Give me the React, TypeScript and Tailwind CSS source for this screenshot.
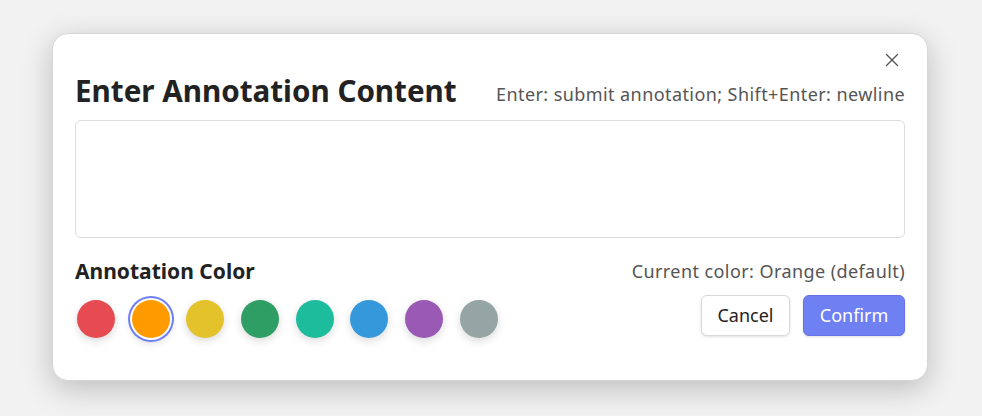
import { X } from "lucide-react";

const colors = [
  { name: "Red", hex: "#e54b51" },
  { name: "Orange", hex: "#ff9a00" },
  { name: "Yellow", hex: "#e4c22b" },
  { name: "Green", hex: "#2f9e64" },
  { name: "Teal", hex: "#1cbc9c" },
  { name: "Blue", hex: "#3598db" },
  { name: "Purple", hex: "#9b59b6" },
  { name: "Gray", hex: "#95a5a6" },
];

export default function App() {
  const selected = "Orange";
  return (
    <div
      className="flex h-[416px] w-[982px] items-start bg-[#f2f2f2] pl-[52px] pt-[33px]"
      style={{ fontFamily: '"Noto Sans", "Open Sans", sans-serif' }}
    >
      <div className="relative w-[876px] rounded-[16px] border border-[#d6d6d6] bg-white px-[22px] pb-[42px] pt-[38px] shadow-[0_8px_30px_rgba(0,0,0,0.22)]">
        <button className="absolute right-[24px] top-[15px] text-[#555]">
          <X className="h-[22px] w-[22px]" strokeWidth={1.5} />
        </button>

        <div className="flex items-end justify-between">
          <h2 className="text-[29.6px] font-bold leading-[38px] text-[#222]">Enter Annotation Content</h2>
          <p className="pb-[2px] text-[18px] tracking-[0.42px] text-[#555]">
            Enter: submit annotation; Shift+Enter: newline
          </p>
        </div>

        <textarea className="mt-[10px] block h-[118px] w-full resize-none rounded-[6px] border border-[#dcdcdc] outline-none" />

        <div className="mt-[19px] flex items-center justify-between">
          <h3 className="text-[21px] font-bold leading-[28px] text-[#222]">Annotation Color</h3>
          <span className="text-[18px] tracking-[0.42px] text-[#555]">Current color: Orange (default)</span>
        </div>

        <div className="mt-[10px] flex items-start justify-between">
          <div className="flex items-center gap-[16.7px] pl-[2px] pt-[5px]">
            {colors.map((c) => (
              <button
                key={c.name}
                title={c.name}
                className={
                  c.name === selected
                    ? "h-[38px] w-[38px] rounded-full shadow-[0_0_0_2px_#fff,0_0_0_4px_#6f7ff2,0_4px_10px_rgba(0,0,0,0.2)]"
                    : "h-[38px] w-[38px] rounded-full shadow-[0_3px_8px_rgba(0,0,0,0.15)]"
                }
                style={{ backgroundColor: c.hex }}
              />
            ))}
          </div>
          <div className="flex items-center gap-[13px]">
            <button className="h-[41px] w-[89px] rounded-[6px] border border-[#d9d9d9] bg-white text-[18px] text-[#222] shadow-[0_1px_3px_rgba(0,0,0,0.12)]">
              Cancel
            </button>
            <button className="h-[41px] w-[102px] rounded-[6px] border border-[#6575e8] bg-[#6f80f2] text-[18px] text-white shadow-[0_1px_3px_rgba(0,0,0,0.12)]">
              Confirm
            </button>
          </div>
        </div>
      </div>
    </div>
  );
}
